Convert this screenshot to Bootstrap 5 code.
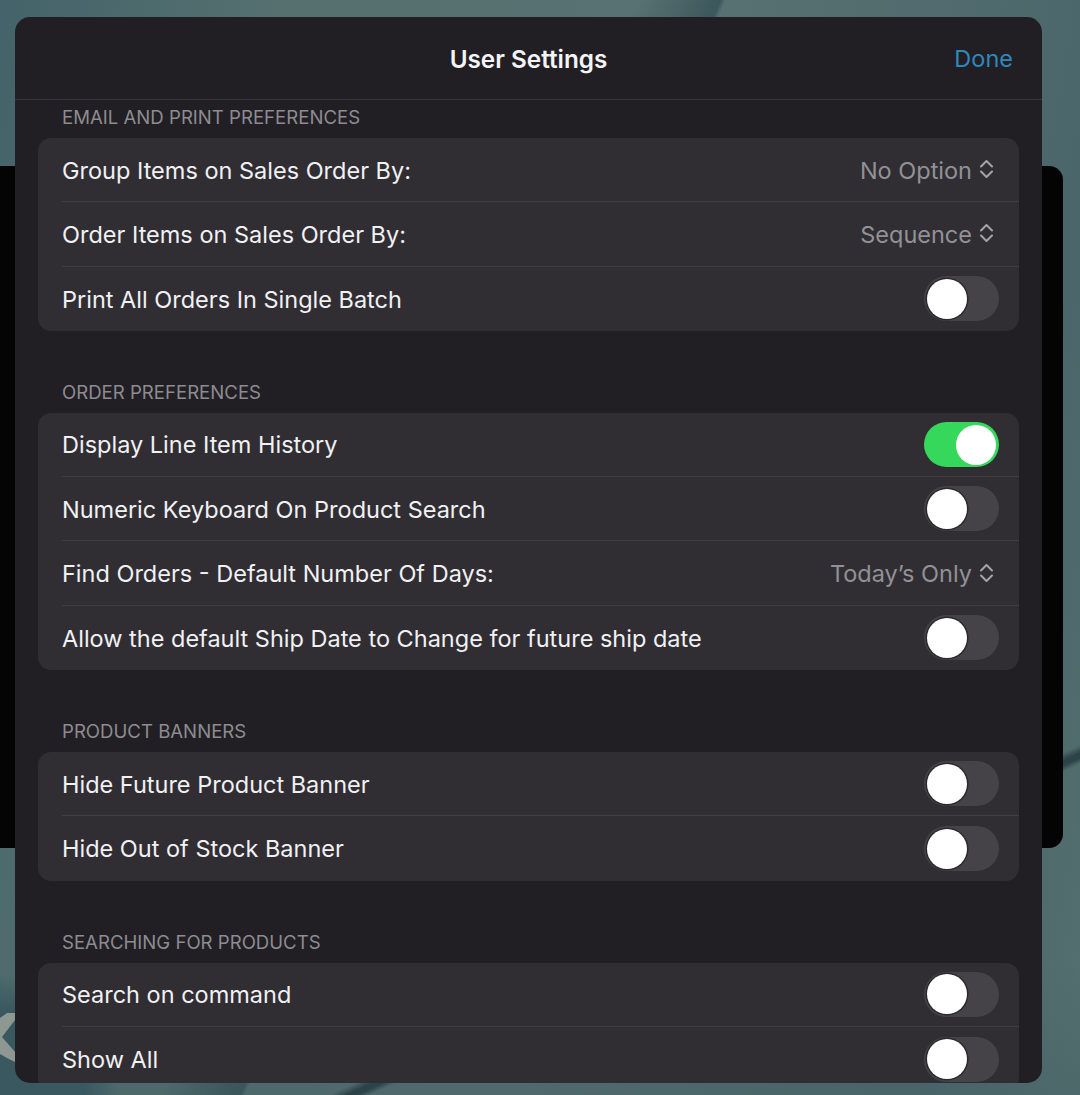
<!DOCTYPE html>
<html lang="en">
<head>
<meta charset="utf-8">
<title>User Settings</title>
<link href="https://cdn.jsdelivr.net/npm/bootstrap@5.3.0/dist/css/bootstrap.min.css" rel="stylesheet">
<style>
html,body{height:1095px;overflow:hidden}
body{position:relative;font-family:Inter,"Liberation Sans",sans-serif;color:#f2f2f4;padding:17px 38px 12px 15px;
 background:
 linear-gradient(113.7deg,transparent 0 41%,rgba(50,78,84,.7) 45.9% 46.2%,transparent 46.5%),
 linear-gradient(155deg,transparent 0 78.1%,rgba(40,62,68,.9) 78.6% 78.9%,transparent 79.3%),
 radial-gradient(circle 120px at 0 1095px,#39585f 0 70%,transparent 100%),
 linear-gradient(180deg,transparent 0 88%,rgba(70,98,102,.5) 100%),
 linear-gradient(100deg,#44636a 0%,#55706f 22%,#587172 55%,#4f6a6d 78%,#4a666a 88%,#55706f 100%)}
.back-panel{position:absolute;left:-30px;top:166px;width:1093px;height:682px;background:#040404;border-radius:14px}
.back-chevron{position:absolute;left:0;top:1010px}
.sheet{position:relative;height:1066px;background:#211f23;border-radius:15px;overflow:hidden}
.sheet-head{height:83px;border-bottom:1px solid #38373b;padding:2px 29px 0 0}
.sheet-title{font-size:24.3px;font-weight:600;color:#f4f4f6;left:0;right:0;text-align:center;position:absolute;top:24px}
.done-link{font-size:23.5px;color:#2f88bd;text-decoration:none;margin-left:auto}
.sheet-body{padding:0 23px;overflow:hidden}
.group-label{font-size:18.6px;line-height:22px;color:#8d8c91;text-transform:uppercase;padding-left:24px;margin:0 0 10px}
.first-label{padding-top:6px}
.set-group{background:#302e33;border-radius:13px;margin-bottom:50px;border:0}
.set-group .list-group-item{background:transparent;border:0;padding:0 0 0 24px;color:#f1f1f3;border-radius:0}
.row-inner{height:64.3px;font-size:23.5px;padding-right:20px;border-bottom:1px solid #3f3e43}
.row-inner>span:first-child{padding-top:1px}
.list-group-item:last-child .row-inner{border-bottom:0}
.pick-val{color:#929196;font-size:23.5px;padding-top:1px;margin-right:5px}
.pick-val svg{margin-left:7px;margin-top:-2px}
.tog{display:block;width:75px;height:45px;border-radius:23px;background:#454348;position:relative}
.tog::after{content:"";position:absolute;left:3px;top:2.5px;width:40px;height:40px;border-radius:50%;background:#fff;box-shadow:0 0 0 1.5px #2a292d}
.tog-on{background:#35d85a}
.tog-on::after{left:32px;box-shadow:none}
</style>
</head>
<body>
<div class="back-panel"></div>
<svg class="back-chevron" width="15" height="56" viewBox="0 0 15 56"><polygon points="0,8 7,3 15,3 15,10 2,27 15,42 15,52 7,48 0,44" fill="#8e9893"/></svg>
<div class="sheet d-flex flex-column">
  <div class="sheet-head d-flex align-items-center flex-shrink-0">
    <div class="sheet-title">User Settings</div>
    <a class="done-link" href="#">Done</a>
  </div>
  <div class="sheet-body">
    <p class="group-label first-label">Email and Print Preferences</p>
    <ul class="list-group set-group">
      <li class="list-group-item"><div class="row-inner d-flex justify-content-between align-items-center"><span>Group Items on Sales Order By:</span><span class="pick-val d-flex align-items-center">No Option<svg width="15" height="20" viewBox="0 0 15 20"><path d="M2 7.5 7.5 2 13 7.5M2 12.5 7.5 18 13 12.5" fill="none" stroke="#a5a4a9" stroke-width="2" stroke-linecap="round" stroke-linejoin="round"/></svg></span></div></li>
      <li class="list-group-item"><div class="row-inner d-flex justify-content-between align-items-center"><span>Order Items on Sales Order By:</span><span class="pick-val d-flex align-items-center">Sequence<svg width="15" height="20" viewBox="0 0 15 20"><path d="M2 7.5 7.5 2 13 7.5M2 12.5 7.5 18 13 12.5" fill="none" stroke="#a5a4a9" stroke-width="2" stroke-linecap="round" stroke-linejoin="round"/></svg></span></div></li>
      <li class="list-group-item"><div class="row-inner d-flex justify-content-between align-items-center"><span>Print All Orders In Single Batch</span><span class="tog"></span></div></li>
    </ul>
    <p class="group-label">Order Preferences</p>
    <ul class="list-group set-group">
      <li class="list-group-item"><div class="row-inner d-flex justify-content-between align-items-center"><span>Display Line Item History</span><span class="tog tog-on"></span></div></li>
      <li class="list-group-item"><div class="row-inner d-flex justify-content-between align-items-center"><span>Numeric Keyboard On Product Search</span><span class="tog"></span></div></li>
      <li class="list-group-item"><div class="row-inner d-flex justify-content-between align-items-center"><span>Find Orders - Default Number Of Days:</span><span class="pick-val d-flex align-items-center">Today’s Only<svg width="15" height="20" viewBox="0 0 15 20"><path d="M2 7.5 7.5 2 13 7.5M2 12.5 7.5 18 13 12.5" fill="none" stroke="#a5a4a9" stroke-width="2" stroke-linecap="round" stroke-linejoin="round"/></svg></span></div></li>
      <li class="list-group-item"><div class="row-inner d-flex justify-content-between align-items-center"><span>Allow the default Ship Date to Change for future ship date</span><span class="tog"></span></div></li>
    </ul>
    <p class="group-label">Product Banners</p>
    <ul class="list-group set-group">
      <li class="list-group-item"><div class="row-inner d-flex justify-content-between align-items-center"><span>Hide Future Product Banner</span><span class="tog"></span></div></li>
      <li class="list-group-item"><div class="row-inner d-flex justify-content-between align-items-center"><span>Hide Out of Stock Banner</span><span class="tog"></span></div></li>
    </ul>
    <p class="group-label">Searching for Products</p>
    <ul class="list-group set-group">
      <li class="list-group-item"><div class="row-inner d-flex justify-content-between align-items-center"><span>Search on command</span><span class="tog"></span></div></li>
      <li class="list-group-item"><div class="row-inner d-flex justify-content-between align-items-center"><span>Show All</span><span class="tog"></span></div></li>
    </ul>
  </div>
</div>
<script src="https://cdn.jsdelivr.net/npm/bootstrap@5.3.0/dist/js/bootstrap.bundle.min.js"></script>
</body>
</html>
